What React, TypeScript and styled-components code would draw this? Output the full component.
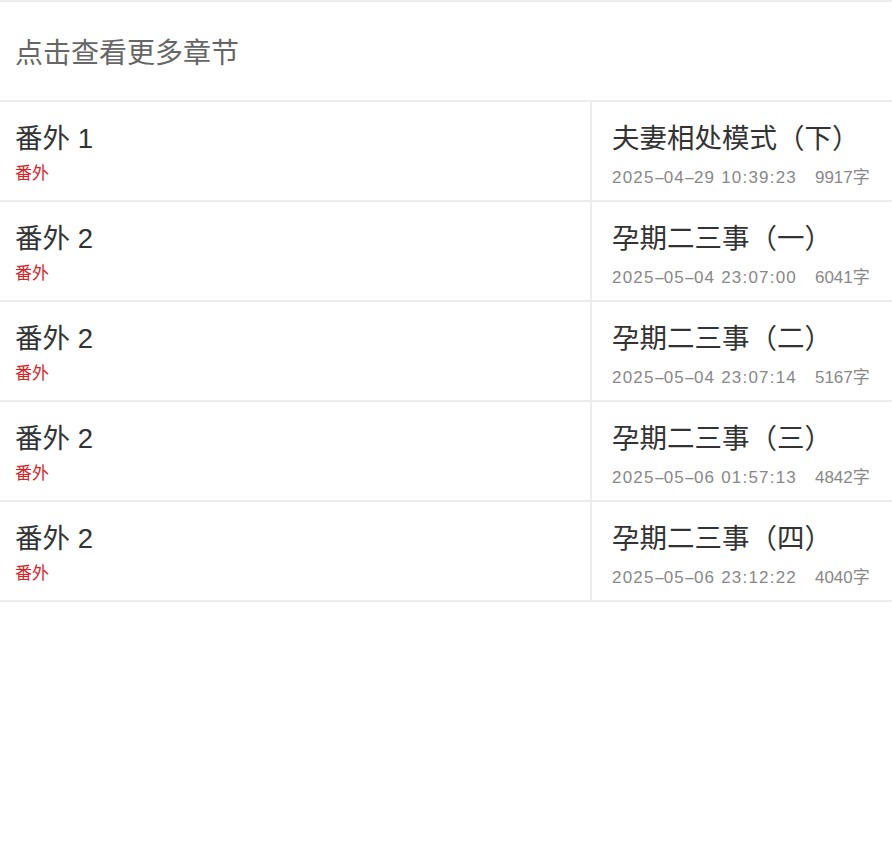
import React from 'react';
import styled, { createGlobalStyle } from 'styled-components';

const GlobalStyle = createGlobalStyle`
  html, body {
    margin: 0;
    padding: 0;
    background: #fff;
  }
  body {
    font-family: "Liberation Sans", "Noto Sans CJK SC", sans-serif;
  }
`;

const Page = styled.div`
  width: 892px;
  border-top: 2px solid #ececec;
`;

const MoreBar = styled.div`
  height: 98px;
  display: flex;
  align-items: center;
  padding-left: 15px;
  font-size: 28px;
  color: #666;
  border-bottom: 2px solid #ececec;
`;

const Row = styled.div`
  display: flex;
  height: 98px;
  border-bottom: 2px solid #ececec;
`;

const Cell = styled.div<{ $side?: boolean }>`
  display: flex;
  flex-direction: column;
  box-sizing: border-box;
  padding-top: 19px;
  ${(p) =>
    p.$side
      ? `width: 302px; padding-left: 20px; border-left: 2px solid #ececec;`
      : `flex: 1; padding-left: 15px;`}
`;

const Title = styled.div`
  font-size: 27.5px;
  line-height: 36px;
  color: #333;
  white-space: nowrap;
`;

const Tag = styled.div`
  margin-top: 5px;
  font-size: 17px;
  line-height: 24px;
  color: #e0201f;
`;

const Meta = styled.div`
  margin-top: 9px;
  font-size: 17px;
  line-height: 24px;
  color: #888;
  white-space: nowrap;
`;

const Stamp = styled.span`
  letter-spacing: 1.2px;
`;

const Dash = styled.span`
  display: inline-block;
  width: 9px;
  text-align: center;
  letter-spacing: 0;
  transform: scaleX(2);
`;

const Words = styled.span`
  margin-left: 18px;
`;

const rows = [
  { left: '番外 1', title: '夫妻相处模式（下）', time: '2025-04-29 10:39:23', words: '9917字' },
  { left: '番外 2', title: '孕期二三事（一）', time: '2025-05-04 23:07:00', words: '6041字' },
  { left: '番外 2', title: '孕期二三事（二）', time: '2025-05-04 23:07:14', words: '5167字' },
  { left: '番外 2', title: '孕期二三事（三）', time: '2025-05-06 01:57:13', words: '4842字' },
  { left: '番外 2', title: '孕期二三事（四）', time: '2025-05-06 23:12:22', words: '4040字' },
];

const Time: React.FC<{ value: string }> = ({ value }) => {
  const parts = value.split('-');
  return (
    <Stamp>
      {parts.map((p, i) => (
        <React.Fragment key={i}>
          {i > 0 && <Dash>-</Dash>}
          {p}
        </React.Fragment>
      ))}
    </Stamp>
  );
};

const App: React.FC = () => {
  return (
    <>
      <GlobalStyle />
      <Page>
        <MoreBar>点击查看更多章节</MoreBar>
        {rows.map((r, i) => (
          <Row key={i}>
            <Cell>
              <Title>{r.left}</Title>
              <Tag>番外</Tag>
            </Cell>
            <Cell $side>
              <Title>{r.title}</Title>
              <Meta>
                <Time value={r.time} />
                <Words>{r.words}</Words>
              </Meta>
            </Cell>
          </Row>
        ))}
      </Page>
    </>
  );
};

export default App;
